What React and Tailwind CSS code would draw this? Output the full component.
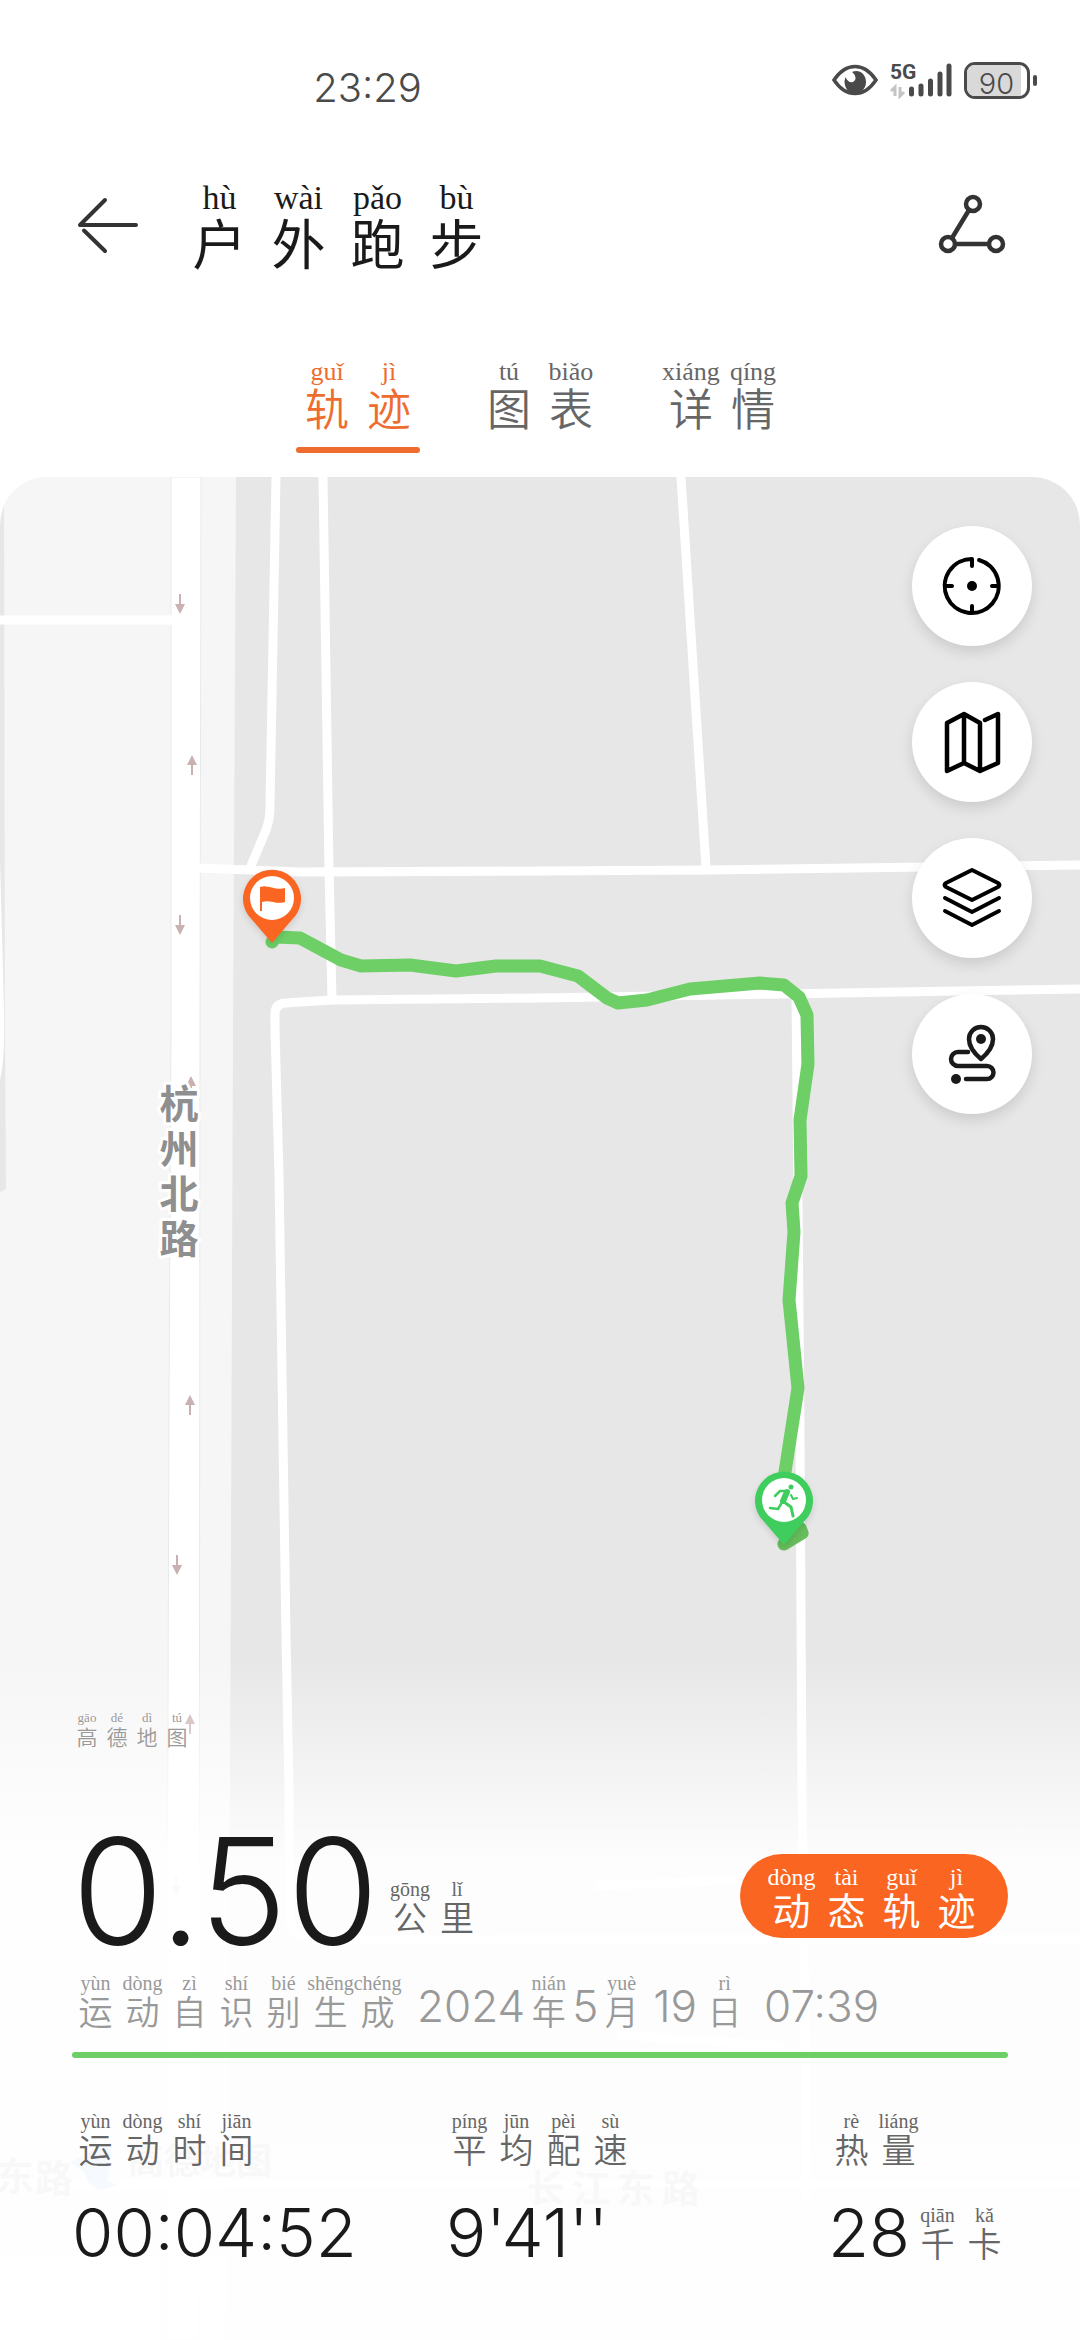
import React, { useState } from 'react';

const TABS = [
    { id: 'track', text: [['轨', 'guǐ'], ['迹', 'jì']] },
    { id: 'chart', text: [['图', 'tú'], ['表', 'biǎo']] },
    { id: 'detail', text: [['详', 'xiáng'], ['情', 'qíng']] },
];

const SIZES = {
    xs: { cell: 'w-[30px]', py: 'text-[13px] leading-[14px]', ch: 'text-[21px] leading-[22px] font-[350]' },
    sm: { cell: 'w-[47px]', py: 'text-[20px] leading-[22px]', ch: 'text-[34px] leading-[34px] font-[350]' },
    md: { cell: 'w-[55px]', py: 'text-[24px] leading-[26px]', ch: 'text-[38px] leading-[38px] font-normal' },
    lg: { cell: 'w-[62px]', py: 'text-[26px] leading-[28px]', ch: 'text-[44px] leading-[42px] font-[350]' },
    xl: { cell: 'w-[79px]', py: 'text-[34px] leading-[36px]', ch: 'text-[54px] leading-[52px] font-normal' },
};

// Chinese characters with pinyin above each one
function Pinyin({ text, size = 'sm' }) {
    const s = SIZES[size];
    return (
        <span className="inline-flex">
            {text.map(([ch, py], i) => (
                <span key={i} className={`flex flex-col items-center ${s.cell}`}>
                    <span className={`whitespace-nowrap font-['Liberation_Serif',serif] ${s.py}`}>{py}</span>
                    <span className={`font-['Noto_Sans_CJK_SC',sans-serif] ${s.ch}`}>{ch}</span>
                </span>
            ))}
        </span>
    );
}

function StatusBar() {
    return (
        <div className="flex h-[116px] items-end justify-between pr-[43px] pl-[29%] text-[#4a4a4a]">
            <span className="pb-1 text-[40px] leading-[48px] font-light">23:29</span>
            <div className="flex items-center gap-3 pb-[17px]">
                <svg width="46" height="38" viewBox="0 0 46 38" aria-label="护眼模式">
                    <path d="M2 19C8 10 15 5.500 23 5.500S38 10 44 19C38 28 31 32.500 23 32.500S8 28 2 19Z" fill="none" stroke="#4a4a4a" strokeWidth="3.500" />
                    <path d="M20 11C27 8 34 13 34 21C34 27 30 32 23 32S12.500 27 12.500 20L13.500 16C15 20 18 22 21 21C25 19 24 14 20 11Z" fill="#4a4a4a" />
                </svg>
                <svg width="62" height="38" viewBox="0 0 62 38" aria-label="5G 信号">
                    <text x="0" y="18" fontSize="21" fontWeight="700" fontFamily="Roboto, sans-serif" fill="#4a4a4a">5G</text>
                    <path d="M5 35V26L1 30M10 26V35L14 31" fill="none" stroke="#c4c4c4" strokeWidth="3" />
                    <path d="M21.500 28V33M31 25V33M40.500 20V33M50 13V33M59 5V33" stroke="#4a4a4a" strokeWidth="5" strokeLinecap="round" />
                </svg>
                <div className="flex items-center gap-[3px]">
                    <div className="h-[37px] w-[66px] rounded-[11px] border-[3px] border-[#4a4a4a]">
                        <div className="h-full w-[90%] rounded-l-lg bg-[#d9d9d9] pl-[5px] text-center text-[29px] leading-[38px] font-light">90</div>
                    </div>
                    <div className="h-[11px] w-1 rounded-sm bg-[#4a4a4a]" />
                </div>
            </div>
        </div>
    );
}

function Header() {
    return (
        <header className="flex h-[156px] items-end px-[72px] text-[#1a1a1a]">
            <button type="button" aria-label="返回" className="mr-9 pb-4">
                <svg width="72" height="60" viewBox="0 0 72 60" fill="none" stroke="#333" strokeWidth="4" strokeLinecap="round" strokeLinejoin="round">
                    <path d="M33 4L8 29H64M12 34.500L33 55" />
                </svg>
            </button>
            <h1 className="flex-1 pb-1">
                <Pinyin size="xl" text={[['户', 'hù'], ['外', 'wài'], ['跑', 'pǎo'], ['步', 'bù']]} />
            </h1>
            <button type="button" aria-label="轨迹分享" className="pb-4">
                <svg width="72" height="64" viewBox="0 0 72 64" fill="none" stroke="#333" strokeWidth="4.500">
                    <circle cx="37" cy="12" r="7" />
                    <circle cx="12" cy="52" r="7" />
                    <circle cx="60" cy="52" r="7" />
                    <path d="M33 18L16 46M19 52H53" />
                </svg>
            </button>
        </header>
    );
}

function LaneArrow({ x, y, up }) {
    return (
        <path
            d={up ? `M${x} ${y}l5 10h-4v10h-2v-10h-4z` : `M${x} ${y + 20}l5 -10h-4v-10h-2v10h-4z`}
            fill="#c9b0b1"
        />
    );
}

const LANE_ARROWS = [
    [180, 594, false], [192, 755, true], [180, 915, false], [191, 1076, true],
    [190, 1395, true], [177, 1555, false], [190, 1714, true], [176, 1876, false],
];

const ROUTE = '272,942 276,937 300,938 341,960 361,966 410,965 456,971 496,966 540,966 578,976 607,998 618,1003 647,1000 690,989 760,983 784,985 799,997 807,1015 808,1064 800,1120 801,1176 792,1203 794,1232 789,1300 798,1388 785,1472';

function TrackMap() {
    return (
        <svg className="absolute inset-0 h-full w-full" viewBox="0 477 1080 1863" preserveAspectRatio="xMidYMin slice" aria-label="运动轨迹地图">
            <rect x="0" y="477" width="1080" height="1863" fill="#e8e7e8" />
            {/* left blocks and the main road */}
            <path d="M4 477H236L233 1030L230 1790L227 2340H0V1192L6 1189L5 1030Z" fill="#f7f6f7" />
            <path d="M0 860L4 1010Q5 1060 0 1080Z" fill="#fff" />
            <path d="M171 477H201L200 1030L199 2340H166L169 1400L171 1030Z" fill="#fff" stroke="#e6ebea" strokeWidth="1" />
            <g fill="none" stroke="#fff" strokeWidth="9" strokeLinejoin="round">
                <path d="M0 620H172" />
                <path d="M276 477L270 805Q270 820 266 830L250 868" />
                <path d="M323 477L329 870L332 999" />
                <path d="M198 868L300 872L540 871L710 870L1080 865" />
                <path d="M1080 989L780 994L540 998L332 1000L285 1003Q275 1004 275 1014V1030L279 1175L286 1636L289 1790L290 1912Q290 1938 310 1940L540 1939H1080" />
                <path d="M681 477L706 868" />
                <path d="M796 994L798 1200L800 1436L802 1790L806 2090V2200" />
                <path d="M595 1886L740 1880M617 2035L784 2046M0 2184H1080" />
            </g>
            {LANE_ARROWS.map(([x, y, up]) => <LaneArrow key={y} x={x} y={y} up={up} />)}
            <g fontFamily="'Noto Sans CJK SC', sans-serif" fontWeight="700" fill="#8f8f8f">
                <g fontSize="39" textAnchor="middle" stroke="#fff" strokeWidth="6" paintOrder="stroke" strokeLinejoin="round">
                    {['杭', '州', '北', '路'].map((ch, i) => (
                        <text key={ch} x="179" y={1118 + i * 45}>{ch}</text>
                    ))}
                </g>
                <g fontSize="38">
                    {['长', '江', '东', '路'].map((ch, i) => (
                        <text key={ch} x={527 + i * 45} y="2202">{ch}</text>
                    ))}
                    <text x="-4" y="2190">东</text>
                    <text x="35" y="2192">路</text>
                </g>
                <text x="128" y="2174" fontSize="36">高德地图</text>
            </g>
            <path d="M70 2162L112 2142L108 2180L118 2186L98 2190L88 2182L84 2172Z" fill="#6ab4ff" />

            <g fill="none" strokeWidth="13" strokeLinecap="round" strokeLinejoin="round">
                <path d="M784 1544L802 1533L800 1528" stroke="#66bd5c" />
                <polyline points={ROUTE} stroke="#6dcf66" />
            </g>
            {/* finish */}
            <g className="drop-shadow-md">
                <path d="M272 943L248 915A29 29 0 1 1 296 915Z" fill="#fb6522" />
                <circle cx="272" cy="898" r="22" fill="#fff" />
                <path d="M260 887C268 884 275 891 285 888V902C276 905 270 899 262 902V911H260Z" fill="#fb6522" />
            </g>
            {/* start */}
            <g className="drop-shadow-md">
                <path d="M784 1545L760 1517A29 29 0 1 1 808 1517Z" fill="#3fce5e" />
                <circle cx="784" cy="1500" r="22" fill="#fff" />
                <g fill="none" stroke="#3fce5e" strokeLinecap="round" strokeLinejoin="round">
                    <circle cx="791" cy="1487" r="2.500" fill="#3fce5e" stroke="none" />
                    <path d="M775 1496L780 1491L788 1491" strokeWidth="2.500" />
                    <path d="M787 1492L783 1501" strokeWidth="6" />
                    <path d="M791 1495L793 1499L797 1498" strokeWidth="2" />
                    <path d="M784 1502L791 1507L793 1516" strokeWidth="3" />
                    <path d="M781 1504L778 1509L770 1508" strokeWidth="2.500" />
                </g>
            </g>
        </svg>
    );
}

const TOOLS = [
    {
        label: '定位',
        icon: (
            <>
                <path d="M37 4A27 27 0 1 1 30 3V10M30 50V56M4 30H10M50 30H56" strokeWidth="4" />
                <circle cx="30" cy="30" r="5" fill="#000" stroke="none" />
            </>
        ),
    },
    {
        label: '地图类型',
        icon: <path d="M43 8L56 2V51L38 59L22 51L5 59V11L22 2L38 11V59M22 2V51" />,
    },
    {
        label: '图层',
        icon: <path d="M30 2L56 15Q59 17 56 19L30 32L4 19Q1 17 4 15ZM3 30L30 44L57 30M3 43L30 57L57 43" strokeWidth="4" />,
    },
    {
        label: '路线',
        icon: (
            <g stroke="#1a1a1a">
                <path d="M39 35C33 30 27 23 27 15A12 12 0 0 1 51 15C51 23 45 30 39 35Z" />
                <path d="M26 28H16A7 7 0 0 0 16 42H45A6.500 6.500 0 0 1 45 55H24" />
                <circle cx="39" cy="15" r="5" fill="#1a1a1a" stroke="none" />
                <circle cx="14" cy="55" r="5" fill="#1a1a1a" stroke="none" />
            </g>
        ),
    },
];

function MapTools() {
    return (
        <div className="relative mt-[49px] mr-12 flex flex-col gap-9 self-end">
            {TOOLS.map((tool) => (
                <button
                    key={tool.label}
                    type="button"
                    aria-label={tool.label}
                    className="flex size-[120px] items-center justify-center rounded-full bg-white shadow-[0_6px_14px_rgba(0,0,0,0.12)]"
                >
                    <svg width="60" height="64" viewBox="0 -2 60 64" fill="none" stroke="#000" strokeWidth="4.500" strokeLinecap="round" strokeLinejoin="round">
                        {tool.icon}
                    </svg>
                </button>
            ))}
        </div>
    );
}

function Stat({ label, value, unit }) {
    return (
        <div>
            <dt className="text-[#666]"><Pinyin text={label} /></dt>
            <dd className="mt-8 flex items-end text-[#1a1a1a]">
                <span className="text-[67px] leading-[70px] font-light">{value}</span>
                {unit && <span className="ml-1 pb-2 text-[#666]"><Pinyin text={unit} /></span>}
            </dd>
        </div>
    );
}

function Summary() {
    return (
        <div className="relative mt-auto bg-linear-to-b from-white/0 via-white/92 via-30% to-white/95 px-[72px] pt-14 pb-[72px]">
            <p className="flex text-[#999]">
                <Pinyin size="xs" text={[['高', 'gāo'], ['德', 'dé'], ['地', 'dì'], ['图', 'tú']]} />
            </p>

            <div className="mt-[67px] flex items-end">
                <span className="text-[148px] leading-[156px] font-light text-[#1a1a1a]">0.50</span>
                <span className="ml-2 flex flex-1 pb-9 text-[#666]">
                    <Pinyin text={[['公', 'gōng'], ['里', 'lǐ']]} />
                </span>
                <button type="button" className="mb-8 flex h-[84px] w-[268px] items-center justify-center rounded-full bg-[#fb6522] text-white">
                    <Pinyin size="md" text={[['动', 'dòng'], ['态', 'tài'], ['轨', 'guǐ'], ['迹', 'jì']]} />
                </button>
            </div>

            <p className="flex items-end pt-[2px] text-[44px] leading-[44px] font-light text-[#999]">
                <Pinyin text={[['运', 'yùn'], ['动', 'dòng'], ['自', 'zì'], ['识', 'shí'], ['别', 'bié'], ['生', 'shēng'], ['成', 'chéng']]} />
                <span className="ml-4">2024</span>
                <Pinyin text={[['年', 'nián']]} />
                <span>5</span>
                <Pinyin text={[['月', 'yuè']]} />
                <span className="ml-2">19</span>
                <span className="ml-1 flex"><Pinyin text={[['日', 'rì']]} /></span>
                <span className="ml-4">07:39</span>
            </p>

            <div className="mt-[24px] h-[6px] rounded-full bg-[#6dcf66]" />

            <dl className="mt-[52px] grid grid-cols-[374fr_382fr_180fr]">
                <Stat label={[['运', 'yùn'], ['动', 'dòng'], ['时', 'shí'], ['间', 'jiān']]} value="00:04:52" />
                <Stat label={[['平', 'píng'], ['均', 'jūn'], ['配', 'pèi'], ['速', 'sù']]} value="9'41''" />
                <Stat label={[['热', 'rè'], ['量', 'liáng']]} value="28" unit={[['千', 'qiān'], ['卡', 'kǎ']]} />
            </dl>
        </div>
    );
}

function App() {
    const [tab, setTab] = useState('track');

    return (
        <div className="flex min-h-screen flex-col bg-white font-['Inter',sans-serif]">
            <StatusBar />
            <Header />
            <div role="tablist" className="mt-[86px] flex justify-center gap-[58px] pb-6">
                {TABS.map((t) => (
                    <button
                        key={t.id}
                        type="button"
                        role="tab"
                        aria-selected={tab === t.id}
                        onClick={() => setTab(t.id)}
                        className={`flex flex-col items-center ${tab === t.id ? 'text-[#ee6c2e]' : 'text-[#666]'}`}
                    >
                        <Pinyin size="lg" text={t.text} />
                        <span className={`mt-[19px] h-[6px] w-full rounded-full ${tab === t.id ? 'bg-[#ee6c2e]' : 'bg-transparent'}`} />
                    </button>
                ))}
            </div>
            <main className="relative flex flex-1 flex-col overflow-hidden rounded-t-[48px]">
                <TrackMap />
                <MapTools />
                <Summary />
            </main>
        </div>
    );
}

export default App;
